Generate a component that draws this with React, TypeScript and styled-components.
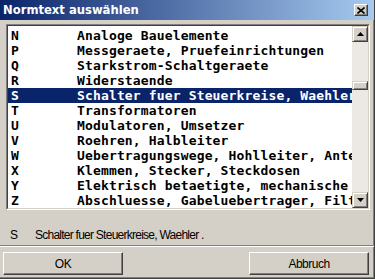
import React from 'react';
import styled, { createGlobalStyle } from 'styled-components';

const GlobalStyle = createGlobalStyle`
    html, body {
        margin: 0;
        padding: 0;
        background: #d4d0c8;
    }
`;

const items: [string, string][] = [
    ['N', 'Analoge Bauelemente'],
    ['P', 'Messgeraete, Pruefeinrichtungen'],
    ['Q', 'Starkstrom-Schaltgeraete'],
    ['R', 'Widerstaende'],
    ['S', 'Schalter fuer Steuerkreise, Waehler'],
    ['T', 'Transformatoren'],
    ['U', 'Modulatoren, Umsetzer'],
    ['V', 'Roehren, Halbleiter'],
    ['W', 'Uebertragungswege, Hohlleiter, Antennen'],
    ['X', 'Klemmen, Stecker, Steckdosen'],
    ['Y', 'Elektrisch betaetigte, mechanische Einrichtungen'],
    ['Z', 'Abschluesse, Gabeluebertrager, Filter'],
];

const Window = styled.div`
    width: 375px;
    height: 279px;
    box-sizing: border-box;
    display: flex;
    flex-direction: column;
    background: #d4d0c8;
    border-right: 1px solid #404040;
    border-bottom: 1px solid #404040;
    box-shadow: inset -1px -1px 0 #808080;
    font-family: "Liberation Sans", Arial, sans-serif;
`;

const TitleBar = styled.div`
    height: 20px;
    display: flex;
    align-items: center;
    justify-content: space-between;
    padding: 0 6px 0 3px;
    background: linear-gradient(to right, #0a246a, #a6caf0);
    color: #fff;
    font-family: "DejaVu Sans", sans-serif;
    font-weight: bold;
    font-size: 11.6px;
`;

const CloseButton = styled.div`
    width: 14px;
    height: 12px;
    box-sizing: border-box;
    display: flex;
    align-items: center;
    justify-content: center;
    background: #d4d0c8;
    border: 1px solid;
    border-color: #fff #404040 #404040 #fff;
    box-shadow: inset -1px -1px 0 #808080;
`;

const Body = styled.div`
    flex: 1;
    display: flex;
    flex-direction: column;
    padding: 4px 4px 0 6px;
`;

const ListBox = styled.div`
    height: 186px;
    box-sizing: border-box;
    display: flex;
    border: 1px solid;
    border-color: #808080 #fff #fff #808080;
    background: #fff;
`;

const ListInner = styled.div`
    flex: 1;
    display: flex;
    border: 1px solid;
    border-color: #404040 #d4d0c8 #d4d0c8 #404040;
    min-width: 0;
`;

const Rows = styled.div`
    flex: 1;
    min-width: 0;
    overflow: hidden;
    padding-top: 2px;
`;

const Row = styled.div<{ $selected?: boolean }>`
    height: 15px;
    display: flex;
    align-items: center;
    white-space: pre;
    font-family: "DejaVu Sans Mono", monospace;
    font-weight: bold;
    font-size: 13px;
    letter-spacing: 0.15px;
    color: ${(p) => (p.$selected ? '#fff' : '#000')};
    background: ${(p) => (p.$selected ? '#0a246a' : 'transparent')};
`;

const Code = styled.span`
    width: 66px;
    padding-left: 3px;
    flex-shrink: 0;
`;

const ScrollBar = styled.div`
    width: 16px;
    display: flex;
    flex-direction: column;
    background: #ece9e4;
`;

const ArrowButton = styled.div`
    height: 16px;
    box-sizing: border-box;
    display: flex;
    align-items: center;
    justify-content: center;
    background: #d4d0c8;
    border: 1px solid;
    border-color: #d4d0c8 #404040 #404040 #d4d0c8;
    box-shadow: inset 1px 1px 0 #fff, inset -1px -1px 0 #808080;
`;

const Track = styled.div`
    flex: 1;
    padding-top: 39px;
`;

const Thumb = styled.div`
    height: 9px;
    box-sizing: border-box;
    background: #d4d0c8;
    border: 1px solid;
    border-color: #d4d0c8 #404040 #404040 #d4d0c8;
    box-shadow: inset 1px 1px 0 #fff, inset -1px -1px 0 #808080;
`;

const Status = styled.div`
    height: 21px;
    padding: 14px 0 0 4px;
    display: flex;
    align-items: center;
    font-size: 12px;
    letter-spacing: -0.75px;
    color: #000;
`;

const StatusCode = styled.span`
    width: 25px;
`;

const Separator = styled.div`
    height: 0;
    margin-left: -6px;
    margin-right: -4px;
    border-top: 1px solid #808080;
    border-bottom: 1px solid #fff;
`;

const ButtonRow = styled.div`
    display: flex;
    justify-content: space-between;
    margin: 5px 1px 0 -3px;
`;

const Button = styled.div`
    width: 120px;
    height: 23px;
    box-sizing: border-box;
    display: flex;
    align-items: center;
    justify-content: center;
    font-size: 12px;
    letter-spacing: -0.5px;
    color: #000;
    background: #d4d0c8;
    border: 1px solid;
    border-color: #fff #404040 #404040 #fff;
    box-shadow: inset -1px -1px 0 #808080;
`;

const Arrow = ({ down }: { down?: boolean }) => (
    <svg width="7" height="4" viewBox="0 0 7 4">
        <path d={down ? 'M0 0h7L3.5 4z' : 'M3.5 0L7 4H0z'} fill="#000" />
    </svg>
);

export default function App() {
    return (
        <>
            <GlobalStyle />
            <Window>
                <TitleBar>
                    <span>Normtext auswählen</span>
                    <CloseButton>
                        <svg width="8" height="7" viewBox="0 0 8 7">
                            <path d="M0.5 0.5l7 6M7.5 0.5l-7 6" stroke="#000" strokeWidth="1.6" />
                        </svg>
                    </CloseButton>
                </TitleBar>
                <Body>
                    <ListBox>
                        <ListInner>
                            <Rows>
                                {items.map(([code, text]) => (
                                    <Row key={code} $selected={code === 'S'}>
                                        <Code>{code}</Code>
                                        {text}
                                    </Row>
                                ))}
                            </Rows>
                            <ScrollBar>
                                <ArrowButton><Arrow /></ArrowButton>
                                <Track><Thumb /></Track>
                                <ArrowButton><Arrow down /></ArrowButton>
                            </ScrollBar>
                        </ListInner>
                    </ListBox>
                    <Status>
                        <StatusCode>S</StatusCode>
                        Schalter fuer Steuerkreise, Waehler .
                    </Status>
                    <Separator />
                    <ButtonRow>
                        <Button>OK</Button>
                        <Button>Abbruch</Button>
                    </ButtonRow>
                </Body>
            </Window>
        </>
    );
}
